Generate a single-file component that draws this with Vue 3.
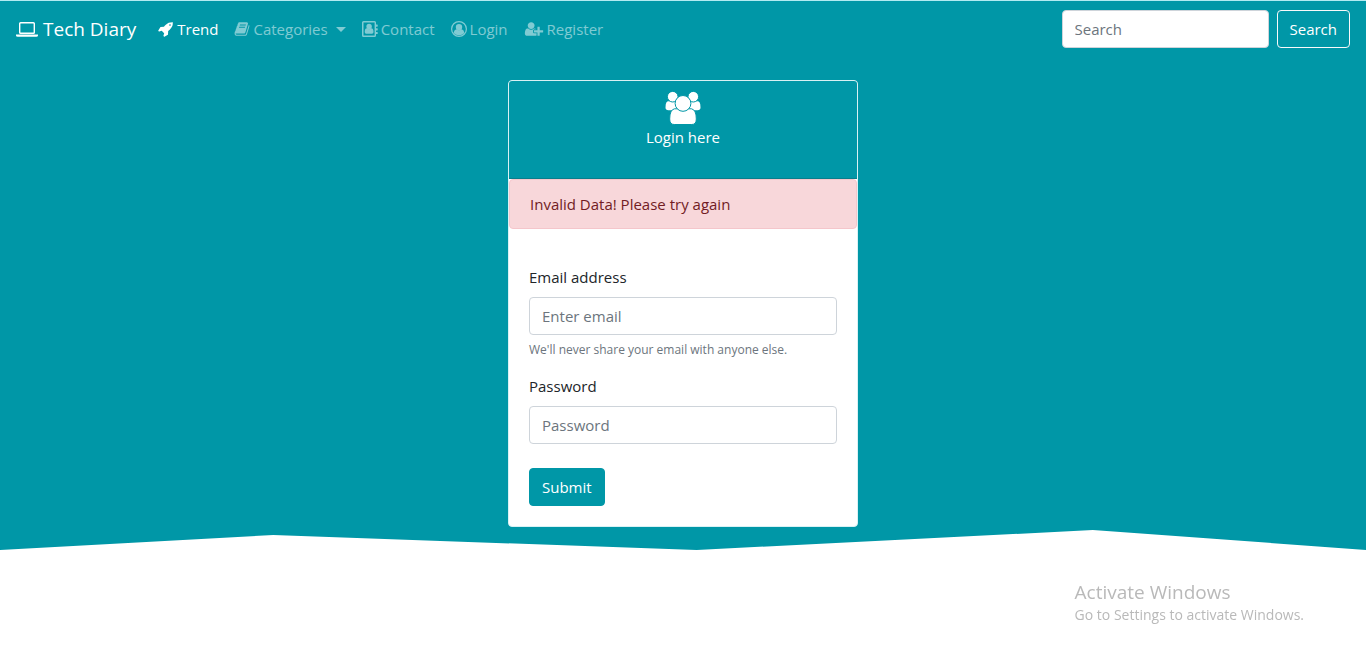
<script setup>
import { ref } from 'vue'

const query = ref('')
const email = ref('')
const password = ref('')
</script>

<template>
  <div class="page">
    <div class="hero">
      <nav class="navbar">
        <a class="brand" href="#">
          <svg class="icon laptop" viewBox="0 0 22 16" aria-hidden="true">
            <path fill-rule="evenodd" d="M4.600 1h12.800q1.600 0 1.600 1.600v8.800q0 1.600-1.600 1.600H4.600Q3 13 3 11.400V2.600Q3 1 4.600 1zM4.800 2.400q-.4 0-.4.4v8.400q0 .4.4.4h12.400q.4 0 .4-.4V2.800q0-.4-.4-.4zM0 13.600h22v1q0 1.200-1.800 1.200H1.800Q0 15.800 0 14.600z" />
          </svg>
          <span>Tech Diary</span>
        </a>
        <ul class="links">
          <li>
            <a class="link active" href="#">
              <svg class="icon" viewBox="0 0 1792 1792" aria-hidden="true">
                <path d="M1440 448q0-40-28-68t-68-28-68 28-28 68 28 68 68 28 68-28 28-68zm224-288q0 249-75.500 430.500t-253.500 360.500q-81 80-195 176l-20 379q-2 16-16 26l-384 224q-7 4-16 4-12 0-23-9l-64-64q-13-14-8-32l85-276-281-281-276 85q-3 1-9 1-14 0-23-9l-64-64q-17-19-5-39l224-384q10-14 26-16l379-20q96-114 176-195 188-187 358-258t431-71q14 0 24 9.500t10 22.500z" />
              </svg>
              <span>Trend</span>
            </a>
          </li>
          <li>
            <a class="link" href="#" aria-haspopup="true">
              <svg class="icon" viewBox="0 0 1792 1792" aria-hidden="true">
                <path d="M1703 478q40 57 18 129l-275 906q-19 64-76.500 107.500t-122.500 43.500h-923q-77 0-148.500-53.500t-99.500-131.500q-24-67-2-127 0-4 3-27t4-37q1-8-3-21.500t-3-19.500q2-11 8-21t16.500-23.500 16.500-23.500q23-38 45-91.500t30-91.500q3-10 .5-30t-.5-28q3-11 17-28t17-23q21-36 42-92t25-90q1-9-2.500-32t.5-28q4-13 22-30.500t22-22.500q19-26 42.500-84.500t27.500-96.500q1-8-3-25.500t-2-26.500q2-8 9-18t18-23 17-21q8-12 16.500-30.500t15-35 16-36 19.500-32 26.500-23.500 36-11.500 47.500 5.500l-1 3q38-9 51-9h761q74 0 114 56t18 130l-274 906q-36 119-71.500 153.500t-128.500 34.500h-869q-27 0-38 15-11 16-1 43 24 70 144 70h923q29 0 56-15.500t35-41.500l300-987q7-22 5-57 38 15 59 43zm-1064 2q-4 13 2 22.500t20 9.500h608q13 0 25.500-9.500t16.500-22.500l21-64q4-13-2-22.500t-20-9.500h-608q-13 0-25.500 9.500t-16.500 22.500zm-83 256q-4 13 2 22.500t20 9.500h608q13 0 25.500-9.500t16.500-22.500l21-64q4-13-2-22.500t-20-9.500h-608q-13 0-25.500 9.500t-16.500 22.500z" />
              </svg>
              <span>Categories</span>
              <span class="caret"></span>
            </a>
          </li>
          <li>
            <a class="link" href="#">
              <svg class="icon" viewBox="0 0 16 16" aria-hidden="true">
                <path fill-rule="evenodd" d="M1.500 0h11q1.500 0 1.500 1.500v2h1.300q.4 0 .4.4v1.400q0 .4-.4.4H14v1.500h1.300q.4 0 .4.4V9q0 .4-.4.4H14v1.500h1.300q.4 0 .4.4v1.400q0 .4-.4.4H14v1.400q0 1.500-1.500 1.500h-11Q0 16 0 14.500v-13Q0 0 1.500 0zm0 1.400v13.200h11.100V1.400z" />
                <circle cx="7.100" cy="5.500" r="2.700" />
                <path d="M4.800 7.300q2.300 1.800 4.600 0 2.100.3 2.100 3.700 0 1.700-1.500 1.700H4.200q-1.500 0-1.500-1.700 0-3.400 2.100-3.700z" />
              </svg>
              <span>Contact</span>
            </a>
          </li>
          <li>
            <a class="link" href="#">
              <svg class="icon" viewBox="0 0 16 16" aria-hidden="true">
                <circle cx="8" cy="8" r="7.400" fill="none" stroke="currentColor" stroke-width="1.200" />
                <circle cx="8" cy="6.100" r="3.200" />
                <path d="M5.200 8.200q2.800 2.100 5.600 0 2.200.5 2.600 3.700Q11 14.300 8 14.300t-5.400-2.400q.4-3.200 2.600-3.700z" />
              </svg>
              <span>Login</span>
            </a>
          </li>
          <li>
            <a class="link" href="#">
              <svg class="icon wide" viewBox="0 0 2048 1792" aria-hidden="true">
                <path d="M704 896q-159 0-271.500-112.500t-112.500-271.500 112.500-271.500 271.500-112.500 271.500 112.500 112.500 271.500-112.500 271.500-271.500 112.500zm960 128h352q13 0 22.500 9.500t9.500 22.500v192q0 13-9.500 22.500t-22.500 9.500h-352v352q0 13-9.500 22.500t-22.500 9.500h-192q-13 0-22.500-9.500t-9.500-22.500v-352h-352q-13 0-22.500-9.500t-9.500-22.500v-192q0-13 9.500-22.500t22.500-9.500h352v-352q0-13 9.500-22.500t22.500-9.500h192q13 0 22.500 9.500t9.500 22.500v352zm-736 224q0 52 38 90t90 38h256v238q-68 50-171 50h-874q-121 0-194-69t-73-190q0-53 3.500-103.500t14-109 26.500-108.500 43-97.500 62-81 85.500-53.500 111.500-20q19 0 39 17 79 61 154.500 91.500t164.500 30.500 164.500-30.500 154.500-91.500q20-17 39-17 132 0 217 96h-223q-52 0-90 38t-38 90v192z" />
              </svg>
              <span>Register</span>
            </a>
          </li>
        </ul>
        <form class="search" role="search" @submit.prevent>
          <input v-model="query" class="field" type="search" placeholder="Search" aria-label="Search" />
          <button class="btn outline" type="submit">Search</button>
        </form>
      </nav>

      <main class="card">
        <header class="card-head">
          <svg class="group" viewBox="0 0 36 34" aria-hidden="true">
            <path d="M4 10.300h8v9H3.500Q.5 19.300.5 16.500q0-4 1-5.300.9-1.200 2.500-.9zM32 10.300h-8v9h8.500q3 0 3-2.800 0-4-1-5.300-.9-1.200-2.500-.9z" />
            <g class="cut">
              <circle cx="7.700" cy="5.700" r="5.300" />
              <circle cx="28.300" cy="5.700" r="5.300" />
              <path d="M9.500 17.800h17q4.800 1 4.800 10.200 0 5.500-4.500 5.500H9.200q-4.500 0-4.500-5.500 0-9.200 4.800-10.200z" />
              <circle cx="18" cy="12.400" r="7.900" />
            </g>
          </svg>
          <p>Login here</p>
        </header>
        <div class="alert" role="alert">Invalid Data! Please try again</div>
        <form class="card-body" @submit.prevent>
          <div class="group-row">
            <label for="email">Email address</label>
            <input id="email" v-model="email" class="field" type="email" placeholder="Enter email" aria-describedby="email-help" />
            <small id="email-help">We'll never share your email with anyone else.</small>
          </div>
          <div class="group-row">
            <label for="password">Password</label>
            <input id="password" v-model="password" class="field" type="password" placeholder="Password" />
          </div>
          <button class="btn solid" type="submit">Submit</button>
        </form>
      </main>
    </div>

    <aside class="watermark">
      <p class="watermark-title">Activate Windows</p>
      <p>Go to Settings to activate Windows.</p>
    </aside>
  </div>
</template>

<style>
body {
  background: #fff;
}
</style>

<style scoped>
.page,
.page * {
  box-sizing: border-box;
}
.page {
  font-family: "Segoe UI", "Open Sans", "Noto Sans", sans-serif;
  font-size: 15px;
  line-height: 24px;
  color: #212529;
}
.hero {
  background: #0097a7;
  border-top: 1px solid #b2ebf2;
  padding-bottom: 23px;
  clip-path: polygon(0 0, 100% 0, 100% 100%, 80% calc(100% - 20px), 51% 100%, 20% calc(100% - 15px), 0 100%);
}
.navbar {
  display: flex;
  align-items: center;
  padding: 8px 16px;
}
.brand {
  display: flex;
  align-items: center;
  gap: 5px;
  height: 40px;
  margin-right: 14px;
  color: #fff;
  font-size: 19px;
  text-decoration: none;
  white-space: nowrap;
}
.icon {
  width: 16px;
  height: 16px;
  fill: currentColor;
  flex: none;
}
.laptop {
  width: 22px;
}
.wide {
  width: 20px;
}
.links {
  display: flex;
  flex: 1;
  margin: 0;
  padding: 0;
  list-style: none;
}
.link {
  display: flex;
  align-items: center;
  gap: 3px;
  padding: 8px;
  color: rgba(255, 255, 255, 0.5);
  text-decoration: none;
  white-space: nowrap;
}
.link.active {
  color: #fff;
}
.caret {
  margin-left: 5px;
  border-top: 5px solid;
  border-left: 5px solid transparent;
  border-right: 5px solid transparent;
}
.search {
  display: flex;
  gap: 8px;
}
.search .field {
  width: 207px;
}
.field {
  display: block;
  width: 100%;
  height: 38px;
  padding: 6px 12px;
  border: 1px solid #ced4da;
  border-radius: 4px;
  background: #fff;
  color: #495057;
  font: inherit;
  appearance: none;
}
.field::placeholder {
  color: #6c757d;
  opacity: 1;
}
.btn {
  height: 38px;
  padding: 6px 12px;
  border: 1px solid #0097a7;
  border-radius: 4px;
  background: #0097a7;
  color: #fff;
  font: inherit;
  cursor: pointer;
}
.outline {
  border-color: #f8f9fa;
}
.card {
  width: 350px;
  max-width: 100%;
  margin: 23px auto 0;
  border: 1px solid #d9f1f4;
  border-radius: 4px;
  background: #fff;
  overflow: hidden;
}
.card-head {
  display: flex;
  flex-direction: column;
  align-items: center;
  padding: 10px 20px 29px;
  border-bottom: 1px solid #087e8c;
  background: #0097a7;
  color: #fff;
}
.card-head p {
  margin: 0;
}
.group {
  width: 36px;
  height: 34px;
  fill: #fff;
}
.cut {
  stroke: #0097a7;
  stroke-width: 1;
}
.alert {
  padding: 12px 20px;
  border: 1px solid #f5c6cb;
  border-radius: 4px;
  background: #f8d7da;
  color: #721c24;
}
.card-body {
  padding: 36px 20px 20px;
}
.group-row {
  margin-bottom: 16px;
}
.group-row + .group-row {
  margin-bottom: 24px;
}
label {
  display: block;
  margin-bottom: 8px;
}
small {
  display: block;
  margin-top: 6px;
  color: #6c757d;
  font-size: 12px;
  line-height: 17px;
}
.watermark {
  position: fixed;
  right: 62px;
  bottom: 33px;
  color: #b9b9b9;
  font-size: 14px;
  line-height: 20px;
  pointer-events: none;
}
.watermark p {
  margin: 0;
}
.watermark-title {
  font-size: 19px;
  line-height: 26px;
}
</style>
